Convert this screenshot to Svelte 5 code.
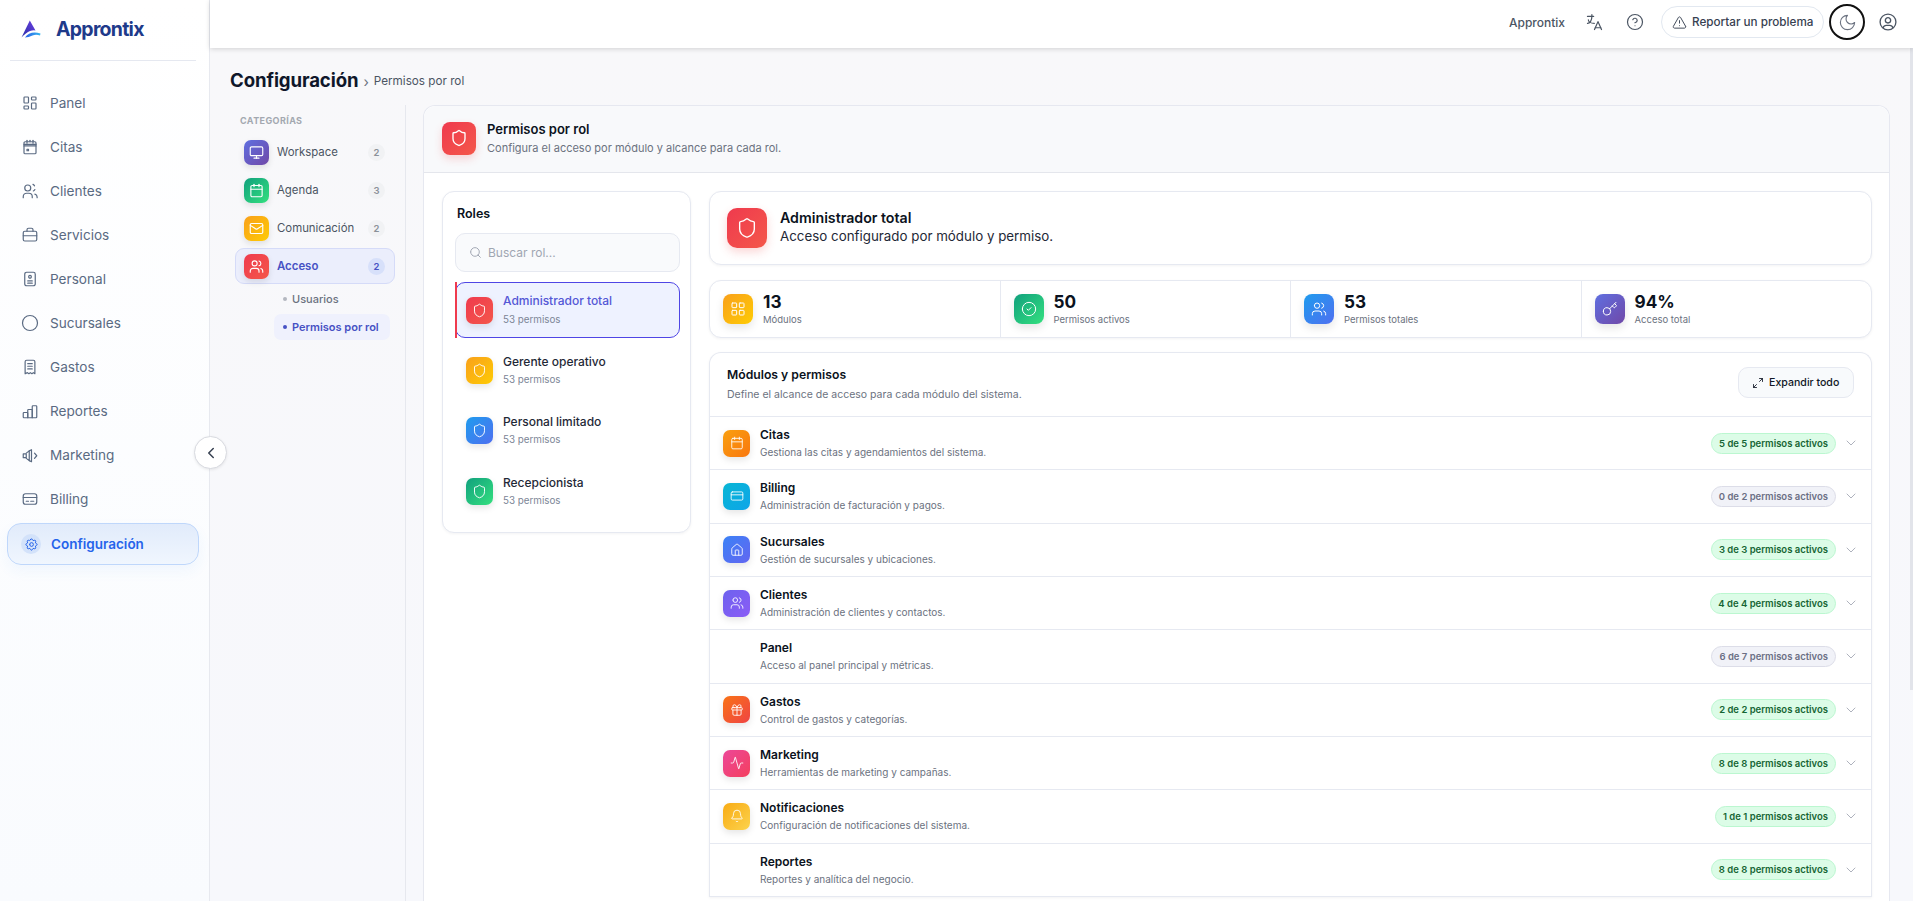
<script>
  const c = (x, y, r) => `M${x - r} ${y}a${r} ${r} 0 1 0 ${2 * r} 0a${r} ${r} 0 1 0 ${-2 * r} 0`;
  const rr = (x, y, w, h, r) => `M${x + r} ${y}h${w - 2 * r}a${r} ${r} 0 0 1 ${r} ${r}v${h - 2 * r}a${r} ${r} 0 0 1 ${-r} ${r}h${-(w - 2 * r)}a${r} ${r} 0 0 1 ${-r} ${-r}v${-(h - 2 * r)}a${r} ${r} 0 0 1 ${r} ${-r}z`;
  const icons = {
    dash: ['M5 4h4a1 1 0 0 1 1 1v6a1 1 0 0 1 -1 1h-4a1 1 0 0 1 -1 -1v-6a1 1 0 0 1 1 -1', 'M5 16h4a1 1 0 0 1 1 1v2a1 1 0 0 1 -1 1h-4a1 1 0 0 1 -1 -1v-2a1 1 0 0 1 1 -1', 'M15 12h4a1 1 0 0 1 1 1v6a1 1 0 0 1 -1 1h-4a1 1 0 0 1 -1 -1v-6a1 1 0 0 1 1 -1', 'M15 4h4a1 1 0 0 1 1 1v2a1 1 0 0 1 -1 1h-4a1 1 0 0 1 -1 -1v-2a1 1 0 0 1 1 -1'],
    event: [rr(4, 5, 16, 16, 1.5), 'M16 3v4', 'M8 3v4', 'M12 3v2', 'M4 8.5h16', 'M4 10.5h16', 'M8 15h2v2h-2z'],
    people: [c(9, 8, 4), 'M3 21v-1.5a4.5 4.5 0 0 1 4.5 -4.5h3a4.5 4.5 0 0 1 4.5 4.5v1.5', 'M16 3.13a4 4 0 0 1 2 2', 'M18.5 10a4 4 0 0 1 -2 2', 'M21.5 21v-1a4 4 0 0 0 -3 -3.85'],
    case: [rr(3, 7, 18, 13, 2), 'M8 7v-2a2 2 0 0 1 2 -2h4a2 2 0 0 1 2 2v2', 'M3 13h18'],
    badge: [rr(5, 3, 14, 18, 2.5), c(12, 9, 1.8), 'M9 14.5h6', 'M9 17.5h6'],
    circle: [c(12, 12, 10)],
    receipt: ['M5.5 21v-16a2 2 0 0 1 2 -2h9a2 2 0 0 1 2 2v16l-2 -1.5l-2 1.5l-2 -1.5l-2 1.5l-2 -1.5l-3 1.5', 'M9 7.5h6', 'M9 11h6', 'M9 14.5h6'],
    bars: ['M3 15a1 1 0 0 1 1 -1h4a1 1 0 0 1 1 1v6h-5a1 1 0 0 1 -1 -1z', 'M9 11a1 1 0 0 1 1 -1h4a1 1 0 0 1 1 1v10h-6z', 'M15 6a1 1 0 0 1 1 -1h4a1 1 0 0 1 1 1v14a1 1 0 0 1 -1 1h-5z'],
    horn: ['M3 10.5h4v5H3z', 'M7 9.5l4-3v13l-4-3', 'M11 6.5l3-1.5v16l-3-1.5', 'M18 9.5l3 3.5-3 3.5'],
    cardline: [rr(3, 5, 18, 14, 3), 'M3 10h18', 'M7 15h3', 'M13 15h4'],
    gear: ['M10.325 4.317c.426 -1.756 2.924 -1.756 3.35 0a1.724 1.724 0 0 0 2.573 1.066c1.543 -.94 3.31 .826 2.37 2.37a1.724 1.724 0 0 0 1.065 2.572c1.756 .426 1.756 2.924 0 3.35a1.724 1.724 0 0 0 -1.066 2.573c.94 1.543 -.826 3.31 -2.37 2.37a1.724 1.724 0 0 0 -2.572 1.065c-.426 1.756 -2.924 1.756 -3.35 0a1.724 1.724 0 0 0 -2.573 -1.066c-1.543 .94 -3.31 -.826 -2.37 -2.37a1.724 1.724 0 0 0 -1.065 -2.572c-1.756 -.426 -1.756 -2.924 0 -3.35a1.724 1.724 0 0 0 1.066 -2.573c-.94 -1.543 .826 -3.31 2.37 -2.37c1 .608 2.296 .07 2.572 -1.065z', c(12, 12, 3)],
    shield: ['M20 13c0 5-3.5 7.5-7.66 8.95a1 1 0 0 1-.67-.01C7.5 20.5 4 18 4 13V6a1 1 0 0 1 1-1c2 0 4.5-1.2 6.24-2.72a1.17 1.17 0 0 1 1.52 0C14.51 3.81 17 5 19 5a1 1 0 0 1 1 1z'],
    grid: [rr(3, 3, 7, 7, 1), rr(14, 3, 7, 7, 1), rr(14, 14, 7, 7, 1), rr(3, 14, 7, 7, 1)],
    check: [c(12, 12, 10), 'm9 12 2 2 4-4'],
    users: ['M16 21v-2a4 4 0 0 0-4-4H6a4 4 0 0 0-4 4v2', c(9, 7, 4), 'M22 21v-2a4 4 0 0 0-3-3.87', 'M16 3.13a4 4 0 0 1 0 7.75'],
    key: ['m15.5 7.5 2.3 2.3a1 1 0 0 0 1.4 0l2.1-2.1a1 1 0 0 0 0-1.4L19 4', 'm21 2-9.6 9.6', c(7.5, 15.5, 5.5)],
    cal: ['M8 2v4', 'M16 2v4', rr(3, 4, 18, 18, 2), 'M3 10h18'],
    card: [rr(2, 5, 20, 14, 2), 'M2 10h20'],
    home: ['M15 21v-8a1 1 0 0 0-1-1h-4a1 1 0 0 0-1 1v8', 'M3 10a2 2 0 0 1 .709-1.528l7-5.999a2 2 0 0 1 2.582 0l7 5.999A2 2 0 0 1 21 10v9a2 2 0 0 1-2 2H5a2 2 0 0 1-2-2z'],
    gift: [rr(3, 8, 18, 4, 1), 'M12 8v13', 'M19 12v7a2 2 0 0 1-2 2H7a2 2 0 0 1-2-2v-7', 'M7.5 8a2.5 2.5 0 0 1 0-5A4.8 8 0 0 1 12 8a4.8 8 0 0 1 4.5-5 2.5 2.5 0 0 1 0 5'],
    activity: ['M22 12h-2.48a2 2 0 0 0-1.93 1.46l-2.35 8.36a.25.25 0 0 1-.48 0L9.24 2.18a.25.25 0 0 0-.48 0l-2.35 8.36A2 2 0 0 1 4.49 12H2'],
    bell: ['M10.268 21a2 2 0 0 0 3.464 0', 'M3.262 15.326A1 1 0 0 0 4 17h16a1 1 0 0 0 .74-1.673C19.41 13.956 18 12.499 18 8A6 6 0 0 0 6 8c0 4.499-1.411 5.956-2.738 7.326'],
    monitor: [rr(2, 3, 20, 14, 2), 'M8 21h8', 'M12 17v4'],
    mail: [rr(2, 4, 20, 16, 2), 'm22 7-8.97 5.7a1.94 1.94 0 0 1-2.06 0L2 7'],
    search: [c(11, 11, 8), 'm21 21-4.3-4.3'],
    down: ['m6 9 6 6 6-6'],
    left: ['m15 18-6-6 6-6'],
    expand: ['M15 3h6v6', 'm21 3-6 6', 'm3 21 6-6', 'M9 21H3v-6'],
    moon: ['M12 3a6 6 0 0 0 9 9 9 9 0 1 1-9-9Z'],
    lang: ['M4 5h7', 'M9 3v2c0 4.418 -2.239 8 -5 8', 'M5 9c0 2.144 2.952 3.908 6.7 4', 'M12 20l4 -9l4 9', 'M19.1 18h-6.2'],
    help: [c(12, 12, 10), 'M9.09 9a3 3 0 0 1 5.83 1c0 2-3 3-3 3', 'M12 17h.01'],
    warn: ['m21.73 18-8-14a2 2 0 0 0-3.48 0l-8 14A2 2 0 0 0 4 21h16a2 2 0 0 0 1.73-3', 'M12 9v4', 'M12 17h.01'],
    user: [c(12, 12, 9.5), c(12, 10, 3.2), 'M6.168 18.849a4 4 0 0 1 3.832 -2.849h4a4 4 0 0 1 3.834 2.855']
  };

  const nav = [
    ['Panel', 'dash'], ['Citas', 'event'], ['Clientes', 'people'], ['Servicios', 'case'], ['Personal', 'badge'],
    ['Sucursales', 'circle'], ['Gastos', 'receipt'], ['Reportes', 'bars'], ['Marketing', 'horn'], ['Billing', 'cardline']
  ];
  const cats = [
    { n: 'Workspace', i: 'monitor', g: 'violet', b: 2 },
    { n: 'Agenda', i: 'cal', g: 'green', b: 3 },
    { n: 'Comunicación', i: 'mail', g: 'amber', b: 2 },
    { n: 'Acceso', i: 'users', g: 'red', b: 2, on: true }
  ];
  const roles = [
    { n: 'Administrador total', g: 'red', on: true },
    { n: 'Gerente operativo', g: 'amber' },
    { n: 'Personal limitado', g: 'blue' },
    { n: 'Recepcionista', g: 'green' }
  ];
  const stats = [
    ['13', 'Módulos', 'grid', 'amber'],
    ['50', 'Permisos activos', 'check', 'green'],
    ['53', 'Permisos totales', 'users', 'blue'],
    ['94%', 'Acceso total', 'key', 'violet']
  ];
  const mods = [
    { n: 'Citas', d: 'Gestiona las citas y agendamientos del sistema.', i: 'cal', g: 'orange', a: 5, t: 5 },
    { n: 'Billing', d: 'Administración de facturación y pagos.', i: 'card', g: 'cyan', a: 0, t: 2 },
    { n: 'Sucursales', d: 'Gestión de sucursales y ubicaciones.', i: 'home', g: 'indigo', a: 3, t: 3 },
    { n: 'Clientes', d: 'Administración de clientes y contactos.', i: 'users', g: 'purple', a: 4, t: 4 },
    { n: 'Panel', d: 'Acceso al panel principal y métricas.', a: 6, t: 7 },
    { n: 'Gastos', d: 'Control de gastos y categorías.', i: 'gift', g: 'coral', a: 2, t: 2 },
    { n: 'Marketing', d: 'Herramientas de marketing y campañas.', i: 'activity', g: 'pink', a: 8, t: 8 },
    { n: 'Notificaciones', d: 'Configuración de notificaciones del sistema.', i: 'bell', g: 'yellow', a: 1, t: 1 },
    { n: 'Reportes', d: 'Reportes y analítica del negocio.', a: 8, t: 8 }
  ];
</script>

{#snippet ic(name, cls = '')}
  <svg class="ic {cls}" viewBox="0 0 24 24" fill="none" stroke="currentColor" stroke-linecap="round" stroke-linejoin="round" aria-hidden="true">
    {#each icons[name] as d}<path {d} />{/each}
  </svg>
{/snippet}

<div class="app">
  <aside class="side">
    <div class="brand">
      <svg class="logo" viewBox="0 0 20 18" aria-hidden="true">
        <defs>
          <linearGradient id="la" x1="0" y1="1" x2="1" y2="0"><stop offset="0" stop-color="#2a2fa8" /><stop offset="1" stop-color="#6a3fe0" /></linearGradient>
          <linearGradient id="lb" x1="0" y1="0" x2="1" y2="0"><stop offset="0" stop-color="#2a5fe8" /><stop offset="1" stop-color="#35b6ee" /></linearGradient>
        </defs>
        <path d="M8.8 0.5 L0.5 17.5 Q5 12.5 9 11 Q12 10 14.5 10.5 Z" fill="url(#la)" />
        <path d="M4 17.5 Q9 10.5 19.5 13.5 L19 15.5 Q15 13.8 11.5 15.5 Q7.5 17.5 4 17.5 Z" fill="url(#lb)" />
      </svg>
      <span>Approntix</span>
    </div>
    <nav class="nav">
      {#each nav as [label, icon]}
        <div class="nav-item">{@render ic(icon)}<span>{label}</span></div>
      {/each}
      <div class="nav-active"><span class="gear">{@render ic('gear')}</span><span>Configuración</span></div>
    </nav>
  </aside>

  <div class="column">
    <header class="top">
      <span class="top-name">Approntix</span>
      <span class="top-ic lang">{@render ic('lang')}</span>
      <span class="top-ic">{@render ic('help')}</span>
      <button class="report">{@render ic('warn')}Reportar un problema</button>
      <span class="moon">{@render ic('moon')}</span>
      <span class="top-ic acct">{@render ic('user')}</span>
    </header>

    <main class="main">
      <div class="crumbs">
        <h1>Configuración</h1>
        <span class="sep">›</span>
        <span class="crumb">Permisos por rol</span>
      </div>
      <div class="body">
        <section class="cats">
          <div class="cats-title">CATEGORÍAS</div>
          {#each cats as k}
            <div class="cat" class:on={k.on}>
              <span class="tile t26 {k.g}">{@render ic(k.i)}</span>
              <span class="cat-name">{k.n}</span>
              <span class="count">{k.b}</span>
            </div>
          {/each}
          <div class="sub"><i></i>Usuarios</div>
          <div class="sub on"><i></i>Permisos por rol</div>
        </section>

        <section class="panel">
          <div class="panel-head">
            <span class="tile t34 red">{@render ic('shield')}</span>
            <div>
              <div class="ph-title">Permisos por rol</div>
              <div class="ph-sub">Configura el acceso por módulo y alcance para cada rol.</div>
            </div>
          </div>
          <div class="panel-body">
            <div class="roles box">
              <div class="roles-title">Roles</div>
              <div class="search">{@render ic('search')}<span>Buscar rol...</span></div>
              <div class="role-list">
                {#each roles as r}
                  <div class="role" class:on={r.on}>
                    <span class="tile t27 {r.g}">{@render ic('shield')}</span>
                    <div>
                      <div class="role-name">{r.n}</div>
                      <div class="role-sub">53 permisos</div>
                    </div>
                  </div>
                {/each}
              </div>
            </div>

            <div class="detail">
              <div class="hero box">
                <span class="tile t40 red">{@render ic('shield')}</span>
                <div>
                  <div class="hero-title">Administrador total</div>
                  <div class="hero-sub">Acceso configurado por módulo y permiso.</div>
                </div>
              </div>

              <div class="stats box">
                {#each stats as [v, l, i, g]}
                  <div class="stat">
                    <span class="tile t30 {g}">{@render ic(i)}</span>
                    <div>
                      <div class="stat-v">{v}</div>
                      <div class="stat-l">{l}</div>
                    </div>
                  </div>
                {/each}
              </div>

              <div class="mods box">
                <div class="mods-head">
                  <div>
                    <div class="mh-title">Módulos y permisos</div>
                    <div class="mh-sub">Define el alcance de acceso para cada módulo del sistema.</div>
                  </div>
                  <button class="expand">{@render ic('expand')}Expandir todo</button>
                </div>
                {#each mods as m}
                  <div class="mod">
                    {#if m.i}
                      <span class="tile t27 {m.g}">{@render ic(m.i)}</span>
                    {:else}
                      <span class="tile t27 blank"></span>
                    {/if}
                    <div class="mod-text">
                      <div class="mod-name">{m.n}</div>
                      <div class="mod-desc">{m.d}</div>
                    </div>
                    <span class="pill" class:full={m.a === m.t}>{m.a} de {m.t} permisos activos</span>
                    {@render ic('down', 'chev')}
                  </div>
                {/each}
              </div>
            </div>
          </div>
        </section>
      </div>
    </main>
  </div>

  <button class="collapse" aria-label="Contraer">{@render ic('left')}</button>
  <div class="thumb"></div>
</div>

<style>
  :global(body) { margin: 0; font-family: Inter, "Liberation Sans", sans-serif; background: #f7f8fb; color: #111827; }
  * { box-sizing: border-box; }
  button { font-family: inherit; }
  .ic { display: block; width: 18px; height: 18px; stroke-width: 1.6; flex: none; }

  .app { display: grid; grid-template-columns: 210px 1fr; height: 901px; overflow: hidden; position: relative; }

  .side { background: linear-gradient(180deg, #ffffff 0%, #f9fbfe 100%); border-right: 1px solid #e7e9ef; display: flex; flex-direction: column; }
  .brand { height: 61px; margin: 0 13px 0 10px; border-bottom: 1px solid #e5e8f0; display: flex; align-items: center; padding: 0 0 3px 11px; gap: 15px; }
  .logo { width: 20px; height: 18px; flex: none; }
  .brand span { font-size: 19.5px; font-weight: 700; letter-spacing: -0.75px; color: #1e3a8a; }
  .nav { padding-top: 19.5px; display: flex; flex-direction: column; }
  .nav-item { height: 44px; display: flex; align-items: center; gap: 11px; padding-left: 21px; font-size: 13.6px; color: #5a6a82; }
  .nav-item .ic { color: #5a6a82; }
  .nav-active { height: 42px; margin: 2.5px 10px 0 7px; border: 1px solid #bfd7fb; border-radius: 14px; background: linear-gradient(180deg, #e1ebfb 0%, #f0f6fe 100%); display: flex; align-items: center; gap: 10px; padding-left: 13px; font-size: 13.5px; font-weight: 600; color: #2563eb; box-shadow: 0 6px 14px rgba(59, 130, 246, .06); }
  .gear { width: 20px; height: 20px; border-radius: 50%; background: #d3e2fa; display: flex; align-items: center; justify-content: center; }
  .gear .ic { width: 15px; height: 15px; }

  .column { display: flex; flex-direction: column; min-width: 0; height: 901px; }
  .top { height: 48px; flex: none; background: #fff; box-shadow: 0 1px 5px rgba(0, 0, 0, .16); position: relative; z-index: 2; display: flex; align-items: center; padding: 0 16px 4px 0; justify-content: flex-end; }
  .top-name { font-size: 12px; font-weight: 500; color: #4b5563; margin-right: 20px; }
  .top-ic { color: #4b5563; width: 18px; display: flex; justify-content: center; margin-right: 23px; }
  .top-ic .ic { width: 18px; height: 18px; }
  .lang .ic { width: 21px; height: 21px; stroke-width: 1.4; }
  .report { height: 32px; width: 163px; background: #fff; border: 1px solid #e2e8f0; border-radius: 16px; display: flex; align-items: center; gap: 5px; padding: 0 0 0 10px; font-size: 11.7px; font-weight: 500; color: #374151; margin-left: -6px; }
  .report .ic { width: 15px; height: 15px; stroke-width: 1.5; }
  .moon { width: 36px; height: 36px; border: 2px solid #111; border-radius: 50%; margin: 0 0 0 5px; display: flex; align-items: center; justify-content: center; color: #6b7280; }
  .moon .ic { width: 19px; height: 19px; stroke-width: 1.4; }
  .acct { margin: 0 0 0 14px; }
  .acct .ic { width: 20px; height: 20px; }

  .main { flex: 1; min-height: 0; overflow: hidden; background: linear-gradient(180deg, #f8f8fa 0%, #f7f8fc 100%); }
  .crumbs { height: 57px; display: flex; align-items: center; padding: 7px 0 0 20px; }
  h1 { margin: 0; font-size: 18.6px; font-weight: 700; color: #0f172a; letter-spacing: -0.1px; }
  .sep { margin: 2px 5px 0 5px; font-size: 14px; color: #6b7280; }
  .crumb { font-size: 11.7px; font-weight: 400; color: #4b5563; margin-top: 1px; }

  .body { display: flex; align-items: stretch; }
  .cats { width: 196px; flex: none; border-right: 1px solid #e6e8ee; padding: 10px 10px 0 25px; }
  .cats-title { font-size: 9px; font-weight: 700; letter-spacing: .4px; color: #a3a8b0; height: 12px; line-height: 12px; margin: 0 0 7px 5px; }
  .cat { height: 36px; display: flex; align-items: center; gap: 8px; padding: 0 9px 0 8px; margin-bottom: 2px; font-size: 11.4px; color: #4b5563; border: 1px solid transparent; border-radius: 9px; }
  .cat-name { flex: 1; }
  .cat + .cat { margin-top: 0.4px; }
  .count { width: 17px; height: 17px; border-radius: 50%; background: #f1f2f4; color: #8b9099; font-size: 9.5px; font-weight: 600; display: flex; align-items: center; justify-content: center; }
  .cat.on { background: #ebeefc; border-color: #d5dbf8; color: #4752c4; font-weight: 600; height: 36px; margin-top: 2px; }
  .cat.on .count { background: #d7e0fa; color: #4752c4; }
  .sub { height: 26px; margin: 0 5px 2px 39px; padding-left: 9px; border-radius: 7px; display: flex; align-items: center; gap: 5px; font-size: 11px; font-weight: 500; color: #6b7280; }
  .sub i { width: 4px; height: 4px; border-radius: 50%; background: #b4b8c0; flex: none; }
  .sub.on { background: #eff1fd; color: #4752c4; font-weight: 600; }
  .sub.on i { background: #4752c4; }

  .tile { display: flex; align-items: center; justify-content: center; color: #fff; flex: none; }
  .t26 { width: 25px; height: 25px; border-radius: 7px; box-shadow: 0 3px 6px rgba(0, 0, 0, .1); }
  .t26 .ic { width: 15px; height: 15px; stroke-width: 1.8; }
  .t27 { width: 27px; height: 27px; border-radius: 7px; box-shadow: 0 3px 7px rgba(0, 0, 0, .1); }
  .t27 .ic { width: 15px; height: 15px; stroke-width: 1.5; }
  .mod .t27 .ic { width: 14px; height: 14px; }
  .t30 { width: 30px; height: 30px; border-radius: 8px; box-shadow: 0 4px 8px rgba(0, 0, 0, .1); }
  .t30 .ic { width: 16px; height: 16px; stroke-width: 1.5; }
  .t34 { width: 34px; height: 33px; border-radius: 8px; box-shadow: 0 4px 9px rgba(239, 68, 68, .2); }
  .t34 .ic { width: 18px; height: 18px; stroke-width: 1.8; }
  .t40 { width: 40px; height: 40px; border-radius: 10px; box-shadow: 0 4px 10px rgba(239, 68, 68, .22); }
  .t40 .ic { width: 22px; height: 22px; stroke-width: 1.5; }
  .blank { background: transparent; box-shadow: none; }
  .red { background: linear-gradient(135deg, #ef3a4e, #f4574a); }
  .amber { background: linear-gradient(135deg, #f9a01b, #fecb04); }
  .green { background: linear-gradient(135deg, #11a07d, #34e07f); }
  .blue { background: linear-gradient(135deg, #1f9cee, #4f6ff0); }
  .violet { background: linear-gradient(135deg, #5f6fe0, #7048a8); }
  .orange { background: linear-gradient(135deg, #f9a010, #f9770f); }
  .cyan { background: linear-gradient(135deg, #07b6d4, #0ea5e9); }
  .indigo { background: linear-gradient(135deg, #3b82f6, #6366f1); }
  .purple { background: linear-gradient(135deg, #6d62ee, #8b5cf6); }
  .coral { background: linear-gradient(135deg, #f97316, #ef4444); }
  .pink { background: linear-gradient(135deg, #ec4899, #f43f5e); }
  .yellow { background: linear-gradient(135deg, #f8ab14, #fcd34d); }

  .panel { flex: 1; min-width: 0; margin: 0 23px 0 17px; background: #fff; border: 1px solid #e6e8f0; border-bottom: 0; border-radius: 12px 12px 0 0; height: 900px; }
  .panel-head { height: 67px; background: #f8f9fb; border-bottom: 1px solid #e4e6ec; border-radius: 12px 12px 0 0; display: flex; align-items: center; gap: 11px; padding: 0 18px 2px; }
  .ph-title { font-size: 13px; font-weight: 600; color: #0b1220; line-height: 16px; margin-bottom: 4px; }
  .ph-sub { font-size: 11px; color: #6b7280; line-height: 14px; }
  .panel-body { display: flex; align-items: flex-start; gap: 18px; padding: 18px 17px 0 18px; }
  .box { background: #fff; border: 1px solid #e6e9f1; border-radius: 12px; box-shadow: 0 1px 3px rgba(15, 23, 42, .05); }

  .roles { width: 249px; flex: none; padding: 12px 10px 13px 12px; }
  .roles-title { font-size: 12.5px; font-weight: 600; color: #0b1220; height: 20px; line-height: 20px; margin: 0 0 9px 2px; }
  .search { height: 39px; border: 1px solid #e6e9f1; border-radius: 10px; background: #f9fafc; display: flex; align-items: center; gap: 6px; padding-left: 13px; font-size: 12px; color: #a0a6b2; }
  .search .ic { width: 13px; height: 13px; stroke-width: 1.8; color: #a0a6b2; }
  .role-list { display: flex; flex-direction: column; gap: 4.4px; margin-top: 10px; }
  .role { height: 56px; display: flex; align-items: center; gap: 10px; padding-left: 10px; border: 1.5px solid transparent; border-radius: 10px; position: relative; }
  .role.on { border-color: #4f46e5; background: #eef2ff; }
  .role.on::before { content: ""; position: absolute; left: -1.5px; top: -1px; bottom: -1px; width: 2px; background: #ef3a4e; }
  .role-name { font-size: 12px; font-weight: 500; color: #1f2937; line-height: 16px; margin-bottom: 3px; letter-spacing: -0.02px; }
  .role.on .role-name { color: #5457d6; margin-bottom: 4px; margin-top: -1px; }
  .role-sub { font-size: 9.8px; color: #7c8596; line-height: 14px; }

  .detail { flex: 1; min-width: 0; display: flex; flex-direction: column; gap: 14px; }
  .hero { height: 74px; display: flex; align-items: center; gap: 13px; padding: 0 0 2px 17px; margin-bottom: 1px; }
  .hero .tile { margin-top: 2px; }
  .hero-title { font-size: 14.2px; font-weight: 600; color: #0b1220; line-height: 18px; }
  .hero-sub { font-size: 13.35px; color: #1f2937; line-height: 18px; }
  .stats { height: 58px; display: flex; }
  .stat { flex: 1; display: flex; align-items: center; gap: 10px; padding-left: 13px; border-right: 1px solid #e6e9f1; }
  .stat:last-child { border-right: 0; }
  .stat-v { font-size: 17.2px; font-weight: 700; color: #0b1220; line-height: 22px; }
  .stat-l { font-size: 9.5px; color: #6b7280; line-height: 14px; }

  .mods { border-bottom: 0; border-radius: 12px 12px 0 0; }
  .mods-head { height: 64px; display: flex; align-items: center; justify-content: space-between; padding: 0 17px 0 17px; border-bottom: 1px solid #e6e9f1; }
  .mods-head > div { margin-top: -1px; }
  .mh-title { font-size: 12.2px; font-weight: 600; color: #0b1220; line-height: 16px; margin-bottom: 5px; }
  .mh-sub { font-size: 10.5px; color: #6b7280; line-height: 14px; }
  .expand { width: 116px; height: 31px; background: #f8fafc; border: 1px solid #e6e9f1; border-radius: 10px; display: flex; align-items: center; gap: 5px; padding: 0 0 0 13px; font-size: 10.6px; font-weight: 500; color: #111827; margin-top: -4px; }
  .expand .ic { width: 12px; height: 12px; stroke-width: 1.7; }
  .mod { height: 53.33px; display: flex; align-items: center; gap: 10px; padding: 0 12px 0 13px; border-bottom: 1px solid #e6e9f1; }
  .mod-text { flex: 1; min-width: 0; }
  .mod-name { font-size: 12px; font-weight: 600; color: #0b1220; line-height: 16px; margin-bottom: 2px; }
  .mod-desc { font-size: 10px; color: #6b7280; line-height: 14px; }
  .pill { height: 21px; padding: 0 7px; border-radius: 11px; background: #f1f2f8; border: 1px solid #dcdde8; color: #6b6f85; font-size: 9.5px; font-weight: 600; display: flex; align-items: center; margin-right: -3px; }
  .pill.full { background: #dcfce7; border-color: #bbf7d0; color: #166534; }
  .chev { width: 16px; height: 16px; color: #a8acb8; stroke-width: 1.4; }

  .collapse { position: absolute; left: 194px; top: 436px; width: 33px; height: 33px; border-radius: 50%; background: #fff; border: 1px solid #d8dae0; box-shadow: 0 1px 3px rgba(0, 0, 0, .08); display: flex; align-items: center; justify-content: center; padding: 0; color: #374151; z-index: 3; }
  .collapse .ic { width: 18px; height: 18px; stroke-width: 2; }
  .thumb { position: absolute; right: 0; top: 48px; width: 3px; height: 642px; background: #e2e4ea; z-index: 1; }
</style>
